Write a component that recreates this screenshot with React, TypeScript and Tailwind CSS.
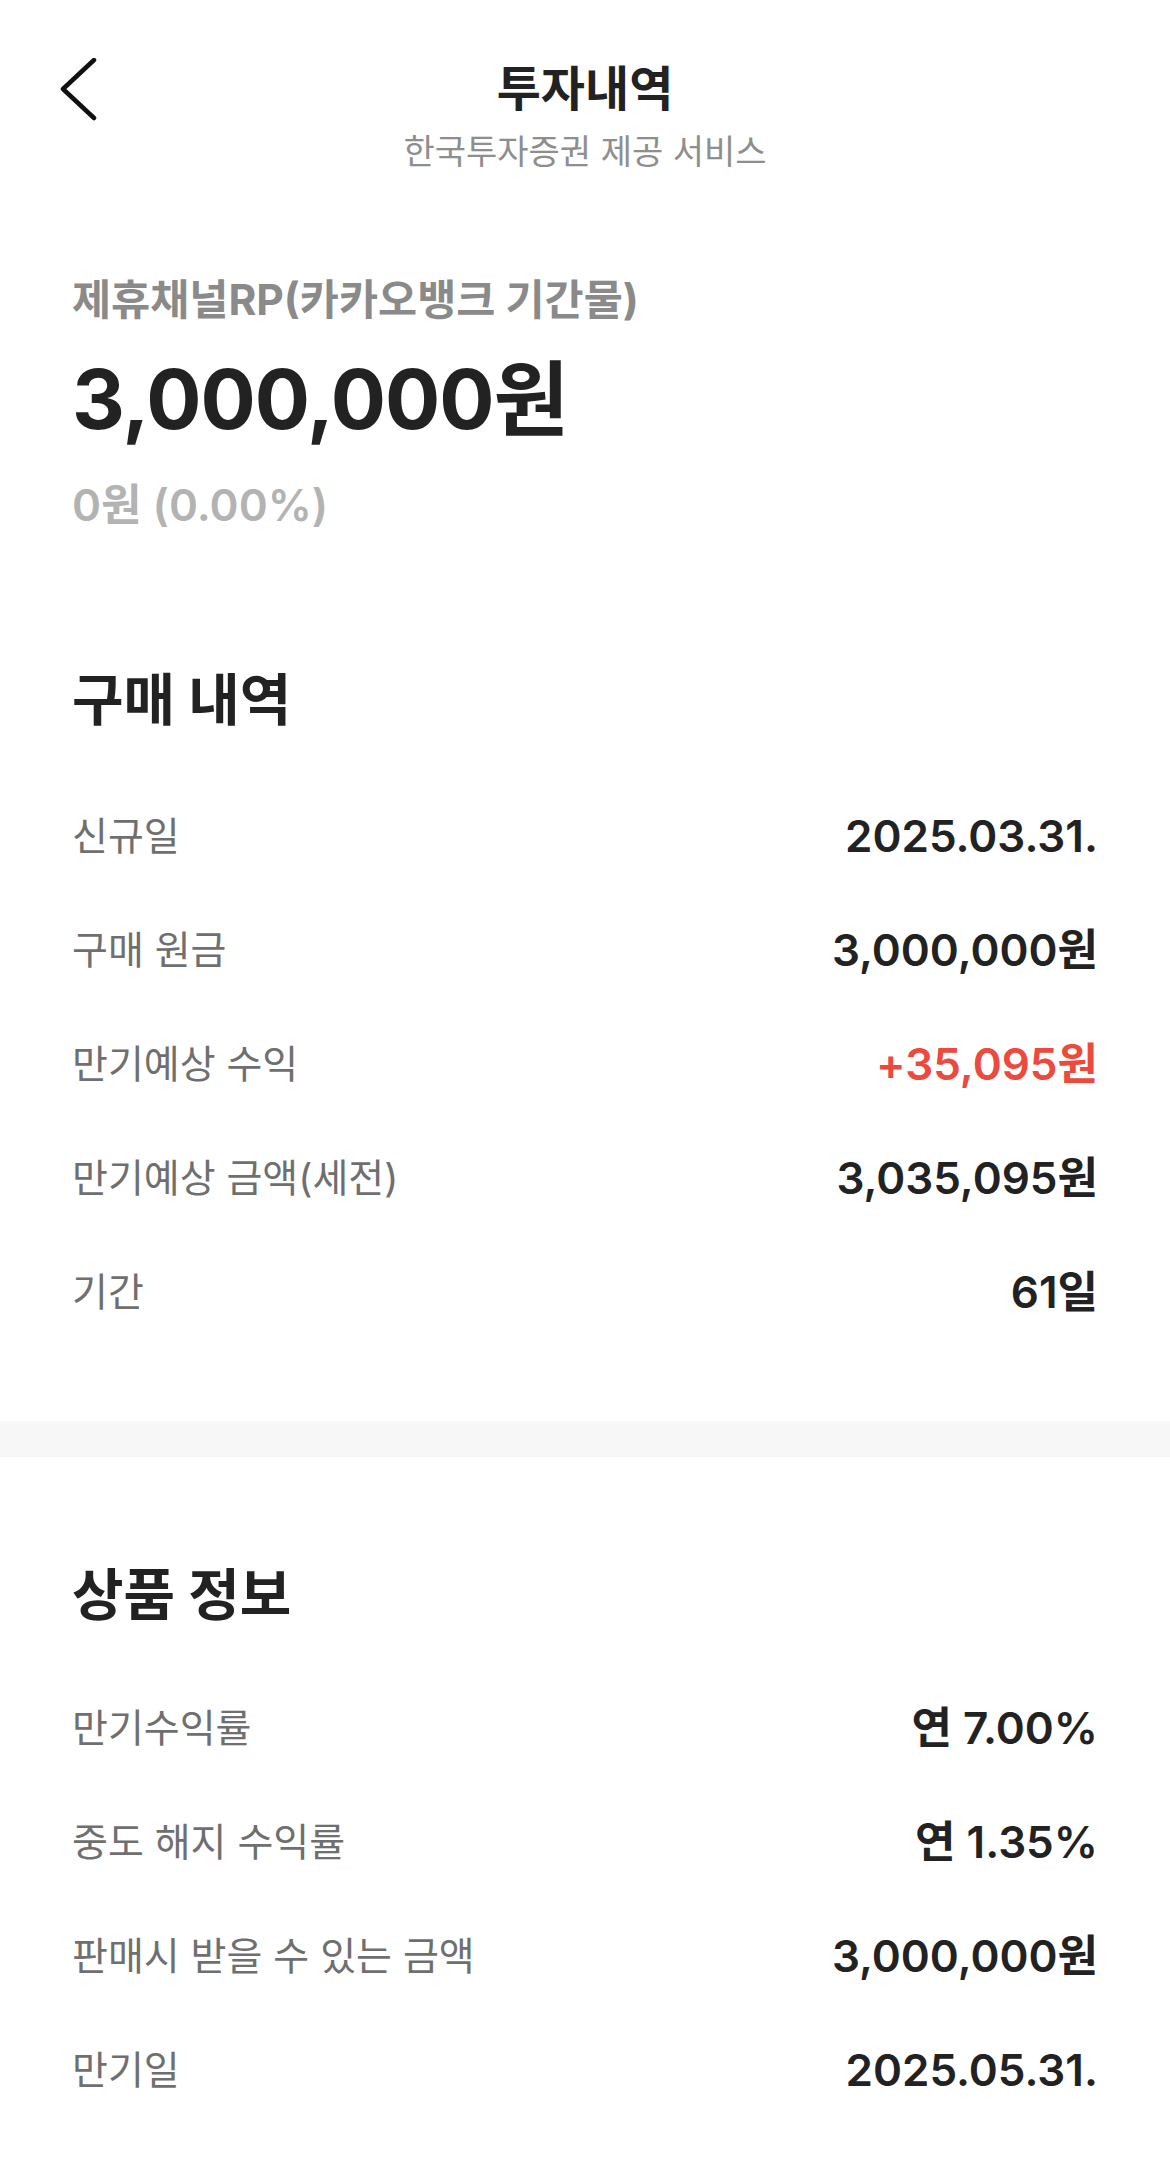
import React from "react";

const purchaseRows = [
  { label: "신규일", value: "2025.03.31." },
  { label: "구매 원금", value: "3,000,000원" },
  { label: "만기예상 수익", value: "+35,095원", accent: true },
  { label: "만기예상 금액(세전)", value: "3,035,095원" },
  { label: "기간", value: "61일" },
];

const productRows = [
  { label: "만기수익률", value: "연 7.00%" },
  { label: "중도 해지 수익률", value: "연 1.35%" },
  { label: "판매시 받을 수 있는 금액", value: "3,000,000원" },
  { label: "만기일", value: "2025.05.31." },
];

function InfoRow({ label, value, accent }: { label: string; value: string; accent?: boolean }) {
  return (
    <div className="flex h-[114px] items-center justify-between">
      <span className="text-[39px] leading-[52px] text-[#6f6f6f]">{label}</span>
      <span
        className={
          "text-[44px] leading-[52px] font-semibold " +
          (accent ? "text-[#ec4a3c]" : "text-[#222222]")
        }
      >
        {value}
      </span>
    </div>
  );
}

export default function App() {
  return (
    <div className="min-h-[2174px] w-full bg-white font-['Inter','Noto_Sans_CJK_KR',sans-serif]">
      {/* header */}
      <header className="relative flex flex-col items-center pt-[61px]">
        <button className="absolute left-[56px] top-[54px] p-1">
          <svg width="38" height="64" viewBox="0 0 38 64" fill="none">
            <path d="M34 2 L3 31 L34 60" stroke="#111" strokeWidth="4.5" strokeLinecap="round" strokeLinejoin="round" />
          </svg>
        </button>
        <h1 className="text-[48px] leading-[56px] font-bold text-[#222222]">투자내역</h1>
        <p className="mt-[13px] text-[34px] leading-[44px] text-[#8e8e8e]">한국투자증권 제공 서비스</p>
      </header>

      {/* summary */}
      <section className="px-[72px] pt-[100px]">
        <div className="text-[42.5px] leading-[52px] font-bold text-[#8a8a8a]">제휴채널RP(카카오뱅크 기간물)</div>
        <div className="mt-[26px] text-[82px] leading-[96px] font-bold tracking-[-1px] text-[#222222]">3,000,000원</div>
        <div className="mt-[31px] text-[44px] leading-[52px] font-semibold text-[#b3b3b3]">0원 (0.00%)</div>
      </section>

      {/* purchase history */}
      <section className="px-[72px] pt-[137px] pb-[72px]">
        <h2 className="text-[56px] leading-[64px] font-bold text-[#222222]">구매 내역</h2>
        <div className="mt-[47px]">
          {purchaseRows.map((r) => (
            <InfoRow key={r.label} {...r} />
          ))}
        </div>
      </section>

      <div className="h-[36px] bg-[#f7f7f7]" />

      {/* product info */}
      <section className="px-[72px] pt-[106px] pb-[46px]">
        <h2 className="text-[56px] leading-[64px] font-bold text-[#222222]">상품 정보</h2>
        <div className="mt-[44px]">
          {productRows.map((r) => (
            <InfoRow key={r.label} {...r} />
          ))}
        </div>
      </section>
    </div>
  );
}
